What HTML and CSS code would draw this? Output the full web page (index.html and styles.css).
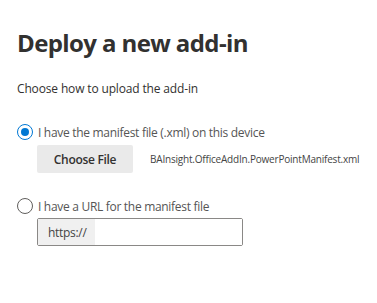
FILE: index.html
```html
<!DOCTYPE html>
<html lang="en">
<head>
    <meta charset="UTF-8">
    <meta name="viewport" content="width=device-width, initial-scale=1.0">
    <title>Deploy a new add-in</title>
    <link rel="stylesheet" href="styles.css">
</head>
<body>
    <div class="panel">
        <h1 class="title">Deploy a new add-in</h1>
        <div class="subtitle">Choose how to upload the add-in</div>

        <!-- Manifest file option -->
        <div class="option">
            <label class="radio-row">
                <span class="radio checked"></span>
                <span class="radio-label">I have the manifest file (.xml) on this device</span>
            </label>
            <div class="option-body file-row">
                <button type="button" class="file-button">Choose File</button>
                <span class="file-name">BAInsight.OfficeAddIn.PowerPointManifest.xml</span>
            </div>
        </div>

        <!-- URL option -->
        <div class="option">
            <label class="radio-row">
                <span class="radio"></span>
                <span class="radio-label">I have a URL for the manifest file</span>
            </label>
            <div class="option-body url-row">
                <div class="url-field">
                    <span class="url-prefix">https://</span>
                    <input type="text" class="url-input">
                </div>
            </div>
        </div>
    </div>
</body>
</html>
```

FILE: styles.css
```css
body {
    margin: 0;
    padding: 0;
    background: #ffffff;
    font-family: 'Open Sans', 'Noto Sans', sans-serif;
    color: #333333;
}
.panel {
    padding: 27px 17px 0 17px;
}
.title {
    font-size: 24px;
    font-weight: 700;
    line-height: 32px;
    margin: 0 0 21px 0;
    color: #323130;
    letter-spacing: -0.6px;
}
.subtitle {
    font-size: 12px;
    line-height: 18px;
    margin-bottom: 24px;
    color: #323130;
    letter-spacing: -0.15px;
}
.option {
    margin-bottom: 23px;
}
.radio-row {
    display: flex;
    align-items: center;
    gap: 5px;
    height: 20px;
}
.radio {
    width: 16px;
    height: 16px;
    border: 1px solid #605e5c;
    border-radius: 50%;
    box-sizing: border-box;
    display: flex;
    align-items: center;
    justify-content: center;
    flex-shrink: 0;
}
.radio.checked {
    border-color: #0078d4;
}
.radio.checked::after {
    content: '';
    width: 8px;
    height: 8px;
    border-radius: 50%;
    background: #0078d4;
}
.radio-label {
    font-size: 12px;
    letter-spacing: -0.3px;
    color: #555555;
}
.option-body {
    padding-left: 20px;
    margin-top: 3px;
}
.url-row {
    margin-top: 2px;
}
.file-row {
    display: flex;
    align-items: center;
    gap: 17px;
}
.file-button {
    flex-shrink: 0;
    font-family: inherit;
    font-size: 12px;
    font-weight: 600;
    letter-spacing: -0.3px;
    color: #323130;
    background: #eaeaea;
    border: none;
    border-radius: 2px;
    width: 96px;
    height: 28px;
    padding: 0;
}
.file-name {
    font-size: 10px;
    letter-spacing: -0.2px;
    color: #444444;
    white-space: nowrap;
}
.url-field {
    display: flex;
    width: 206px;
    height: 28px;
    border: 1px solid #8a8886;
    border-radius: 2px;
    box-sizing: border-box;
}
.url-prefix {
    display: flex;
    align-items: center;
    padding: 0 10px;
    background: #f0f0f0;
    font-size: 12px;
    letter-spacing: -0.3px;
    color: #444444;
    width: 57px;
    box-sizing: border-box;
}
.url-input {
    flex: 1;
    border: none;
    outline: none;
    min-width: 0;
    background: #ffffff;
}
```
